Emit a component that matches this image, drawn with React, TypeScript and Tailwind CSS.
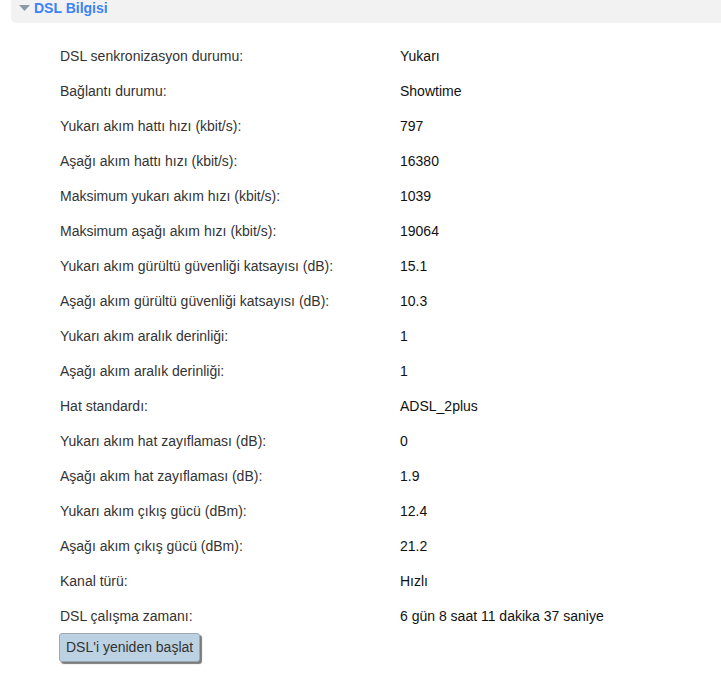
import React from "react";

const rows: [string, string][] = [
  ["DSL senkronizasyon durumu:", "Yukarı"],
  ["Bağlantı durumu:", "Showtime"],
  ["Yukarı akım hattı hızı (kbit/s):", "797"],
  ["Aşağı akım hattı hızı (kbit/s):", "16380"],
  ["Maksimum yukarı akım hızı (kbit/s):", "1039"],
  ["Maksimum aşağı akım hızı (kbit/s):", "19064"],
  ["Yukarı akım gürültü güvenliği katsayısı (dB):", "15.1"],
  ["Aşağı akım gürültü güvenliği katsayısı (dB):", "10.3"],
  ["Yukarı akım aralık derinliği:", "1"],
  ["Aşağı akım aralık derinliği:", "1"],
  ["Hat standardı:", "ADSL_2plus"],
  ["Yukarı akım hat zayıflaması (dB):", "0"],
  ["Aşağı akım hat zayıflaması (dB):", "1.9"],
  ["Yukarı akım çıkış gücü (dBm):", "12.4"],
  ["Aşağı akım çıkış gücü (dBm):", "21.2"],
  ["Kanal türü:", "Hızlı"],
  ["DSL çalışma zamanı:", "6 gün 8 saat 11 dakika 37 saniye"],
];

export default function App() {
  return (
    <div className="w-[721px] h-[676px] bg-white font-['Liberation_Sans',Arial,sans-serif] overflow-hidden">
      <div className="ml-[11px] h-[23px] bg-[#f2f2f2] rounded-bl-[5px] flex items-start pt-[1px]">
        <svg width="12" height="8" viewBox="0 0 12 8" className="ml-[8px] mr-[3px] mt-[3px]">
          <polygon points="0,1 11,1 5.5,7" fill="#8a9aa6" />
        </svg>
        <span className="text-[14px] font-bold text-[#3b82f6] leading-[14px]">DSL Bilgisi</span>
      </div>
      <div className="pt-[16px] pl-[60px]">
        {rows.map(([l, v]) => (
          <div key={l} className="h-[35px] flex items-center text-[14px]">
            <div className="w-[340px] text-[#333333]">{l}</div>
            <div className="text-[#111111]">{v}</div>
          </div>
        ))}
        <button className="-mt-[1px] -ml-[1px] h-[29px] px-[6px] bg-[#bcd2e3] border border-[#9aa8b3] rounded-[3px] shadow-[2px_2px_1px_#7a7a7a] text-[14px] text-[#333333]">
          DSL'i yeniden başlat
        </button>
      </div>
    </div>
  );
}
